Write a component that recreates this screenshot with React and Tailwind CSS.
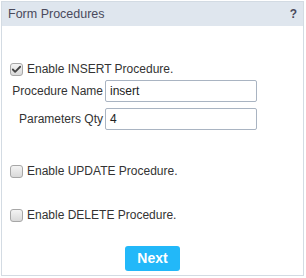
import { Check } from 'lucide-react';

const font = { fontFamily: '"Liberation Sans", Arial, sans-serif' };

function Box({ checked }) {
  return (
    <span className="flex h-[13px] w-[13px] shrink-0 items-center justify-center rounded-[3px] border border-[#a7a7a7] bg-gradient-to-b from-[#f4f4f4] to-[#d9d9d9]">
      {checked && <Check className="h-[11px] w-[11px] text-[#444]" strokeWidth={4} />}
    </span>
  );
}

function CheckRow({ label, checked, className = '' }) {
  return (
    <label className={`flex h-[14px] items-center gap-[4px] pl-[8px] text-[12px] text-[#333] ${className}`}>
      <Box checked={checked} />
      <span>{label}</span>
    </label>
  );
}

function Field({ label, value, className = '' }) {
  return (
    <div className={`flex h-[22px] items-center ${className}`}>
      <span className="w-[103px] pr-[2px] text-right text-[12px] text-[#333]">{label}</span>
      <div className="flex h-[22px] w-[152px] items-center rounded-[2px] border border-[#a9b4c2] bg-white pl-[4px] text-[12px] text-[#222]">
        {value}
      </div>
    </div>
  );
}

export default function App() {
  return (
    <div className="h-[278px] w-[306px] bg-white p-px" style={font}>
      <div className="flex h-[275px] w-[303px] flex-col border border-[#d3dbe3]">
        <div className="flex h-[24px] items-center justify-between bg-[#dfe6ee] pl-[6px] pr-[6px]">
          <span className="text-[12.5px] text-[#4a4a5c]">Form Procedures</span>
          <span className="text-[12px] font-bold text-[#4a4a5c]">?</span>
        </div>
        <CheckRow label="Enable INSERT Procedure." checked className="mt-[36px]" />
        <Field label="Procedure Name" value="insert" className="mt-[4px]" />
        <Field label="Parameters Qty" value="4" className="mt-[6px]" />
        <CheckRow label="Enable UPDATE Procedure." className="mt-[34px]" />
        <CheckRow label="Enable DELETE Procedure." className="mt-[30px]" />
        <div className="mt-[24px] flex justify-center">
          <button className="h-[25px] w-[55px] rounded-[3px] bg-[#22b8f9] text-[14px] font-bold text-white">
            Next
          </button>
        </div>
      </div>
    </div>
  );
}
